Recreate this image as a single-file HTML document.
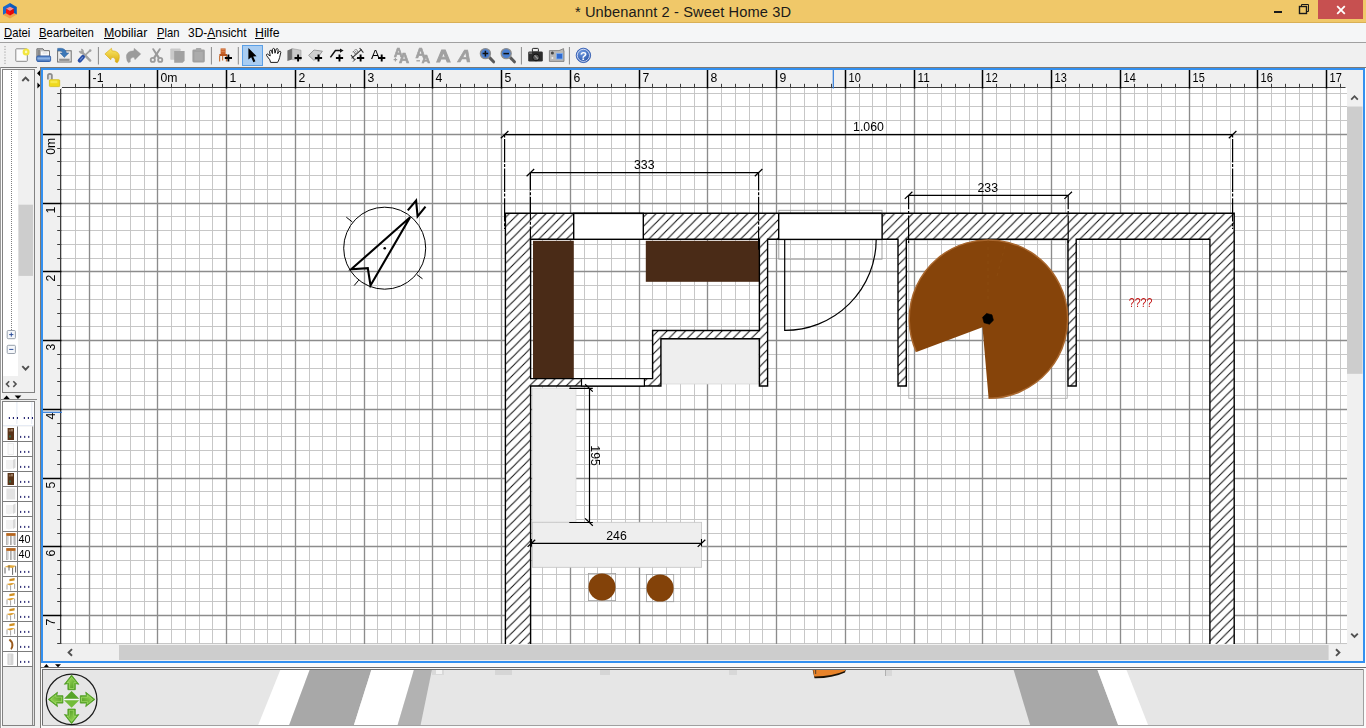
<!DOCTYPE html><html><head><meta charset="utf-8"><title>Sweet Home 3D</title><style>

*{margin:0;padding:0;box-sizing:border-box}
html,body{width:1366px;height:728px;overflow:hidden;background:#f0f0f0;font-family:"Liberation Sans",sans-serif;color:#000}
.abs{position:absolute}
#title{left:0;top:0;width:1366px;height:23px;background:linear-gradient(#f0c869 0,#f0c869 21.5px,#d9b056 22px,#d9b056 23px)}
#title .t{left:0;width:1366px;top:1.6px;text-align:center;font-size:14.65px;line-height:20px;color:#1a1a1a;letter-spacing:0.1px}
#menu{left:0;top:23px;width:1366px;height:19px;background:#f5f6f7}
#menu span{position:absolute;top:1.5px;font-size:12.4px;line-height:16px;white-space:nowrap;color:#000;display:inline-block;transform-origin:0 50%}
#menu u{text-decoration:underline;text-underline-offset:1.1px}
#menuline{left:0;top:42px;width:1366px;height:1px;background:#a0a0a0}
#tb{left:0;top:43px;width:1366px;height:24px;background:#f0f0f0}
.sep{position:absolute;top:4px;width:1px;height:17px;background:#8c8c8c}
svg{position:absolute;overflow:visible;will-change:transform}

</style></head><body>
<div id="title" class="abs"><div class="t abs">* Unbenannt 2 - Sweet Home 3D</div>
<svg style="left:0;top:0" width="22" height="22" viewBox="0 0 22 22"><polygon points="3,14.8 10,18.5 16.8,14.6 10,11" fill="#f0a04a"/><polygon points="10,3 3,7.1 3,14.8 10,11" fill="#1a68cc"/><polygon points="10,3 16.8,7.1 16.8,14.6 10,11" fill="#0d5abc"/><polygon points="6,8.8 10,6.7 13.9,8.8 10,10.9" fill="#ff8a8a"/><polygon points="6,8.8 10,10.9 10,15.4 6,13.3" fill="#ff1010"/><polygon points="13.9,8.8 10,10.9 10,15.4 13.9,13.3" fill="#e80808"/></svg>
<div class="abs" style="left:1274px;top:11px;width:8px;height:2px;background:#1a1a1a"></div>
<svg style="left:1298px;top:3px" width="12" height="12" viewBox="0 0 12 12"><path d="M3.5 3.5V1.5H10.5V8.5H8.5" fill="none" stroke="#1a1a1a" stroke-width="1"/><rect x="1.5" y="3.5" width="7" height="7" fill="none" stroke="#1a1a1a" stroke-width="1.4"/></svg>
<div class="abs" style="left:1318px;top:0;width:45px;height:19px;background:#c75050"></div>
<svg style="left:1336px;top:5px" width="10" height="10" viewBox="0 0 10 10"><path d="M1.2 1.2L8.8 8.8M8.8 1.2L1.2 8.8" stroke="#fff" stroke-width="1.8"/></svg>
</div>
<div id="menu" class="abs">
<span id="m0" style="left:4.4px;transform:scaleX(0.9088)"><u>D</u>atei</span>
<span id="m1" style="left:38.5px;transform:scaleX(0.9159)"><u>B</u>earbeiten</span>
<span id="m2" style="left:104.3px;transform:scaleX(0.9979)"><u>M</u>obiliar</span>
<span id="m3" style="left:157.3px;transform:scaleX(0.9029)"><u>P</u>lan</span>
<span id="m4" style="left:188.4px;transform:scaleX(0.9668)">3D-<u>A</u>nsicht</span>
<span id="m5" style="left:255.4px;transform:scaleX(0.9919)"><u>H</u>ilfe</span>
</div><div id="menuline" class="abs"></div>
<svg style="left:0;top:43px" width="700" height="24" viewBox="0 43 700 24" font-family="Liberation Sans, sans-serif">
<defs><linearGradient id="gb" x1="0" y1="0" x2="0" y2="1"><stop offset="0" stop-color="#7fa6d8"/><stop offset="1" stop-color="#2f5fa8"/></linearGradient><linearGradient id="gb2" x1="0" y1="0" x2="0" y2="1"><stop offset="0" stop-color="#4a7cc4"/><stop offset="0.45" stop-color="#8fb4e4"/><stop offset="1" stop-color="#3566b4"/></linearGradient><linearGradient id="gy" x1="0" y1="0" x2="0" y2="1"><stop offset="0" stop-color="#fbe96a"/><stop offset="1" stop-color="#d9a90c"/></linearGradient><radialGradient id="gh" cx="0.4" cy="0.3" r="0.8"><stop offset="0" stop-color="#6f9ae0"/><stop offset="1" stop-color="#1f4aa0"/></radialGradient></defs>
<path d="M5 46V64" stroke="#b4b4b4" stroke-width="1.4" stroke-dasharray="1.2 1.6" fill="none"/>
<rect x="97.9" y="47" width="1" height="17.5" fill="#8a8a8a"/>
<rect x="210.9" y="47" width="1" height="17.5" fill="#8a8a8a"/>
<rect x="237.8" y="47" width="1" height="17.5" fill="#8a8a8a"/>
<rect x="520.9" y="47" width="1" height="17.5" fill="#8a8a8a"/>
<rect x="568.9" y="47" width="1" height="17.5" fill="#8a8a8a"/>
<rect x="15.8" y="48.8" width="11.5" height="12.5" rx="0.6" fill="#fcfcfc" stroke="#8a8a8a" stroke-width="1"/><circle cx="26.1" cy="51.9" r="3.5" fill="#f3e63e"/><circle cx="26.1" cy="51.9" r="1.3" fill="#fdf8b8"/>
<path d="M36.9 48.8H43L44.4 50.7H49.4V60H36.9Z" fill="#c4c4c4" stroke="#6e6e6e" stroke-width="1"/><rect x="37.6" y="49.6" width="2.6" height="7" fill="#8a8a8a"/><rect x="41" y="51.4" width="8" height="4.4" fill="#fafafa"/><path d="M42.6 53H47.4" stroke="#c8c8c8" stroke-width="0.7"/><rect x="36.8" y="56" width="13.8" height="5.5" rx="1.1" fill="url(#gb2)" stroke="#2c5aa4" stroke-width="0.9"/>
<rect x="57.6" y="50.8" width="13.6" height="11.2" fill="#ebebeb" stroke="#6e6e6e" stroke-width="1"/><rect x="59.2" y="58.7" width="10.4" height="2.2" fill="#909090"/><path d="M57.6 48.4Q65.8 47.4 66.4 53H68.8L64.3 57.4L60.2 53H62.6Q62.4 50.4 57.6 50.8Z" fill="#3c78b8" stroke="#2a5f9a" stroke-width="0.5"/>
<path d="M81.4 51.6L90.2 60.6" stroke="#a2a2a2" stroke-width="2.4" stroke-linecap="round"/><path d="M79.4 51Q80.2 53.6 82.8 52.6Q83.8 50 81.2 49.2" fill="none" stroke="#a2a2a2" stroke-width="1.5"/><path d="M90 50.6L84.6 55.6" stroke="#a2a2a2" stroke-width="1.7" stroke-linecap="round"/><circle cx="90.2" cy="50.5" r="1.3" fill="#a2a2a2"/><path d="M83 56.9L79.7 60.6" stroke="#2a4fa6" stroke-width="4" stroke-linecap="round"/><path d="M82.6 57.4L80.4 59.9" stroke="#6f8fd0" stroke-width="1.1" stroke-linecap="round"/>
<path d="M104.9 53.9L111.5 48.3L111.9 50.8Q119.7 50.9 119.3 57.5Q119 61.2 117.2 62.8L115.3 61.8Q116.2 57.5 111.7 57.3L110.7 59.7Z" fill="url(#gy)" stroke="#d8aa0c" stroke-width="0.6" stroke-linejoin="round"/>
<path transform="translate(245.7 0) scale(-1 1)" d="M104.9 53.9L111.5 48.3L111.9 50.8Q119.7 50.9 119.3 57.5Q119 61.2 117.2 62.8L115.3 61.8Q116.2 57.5 111.7 57.3L110.7 59.7Z" fill="#9b9b9b" stroke="#9b9b9b" stroke-width="0.4" stroke-linejoin="round"/>
<path d="M151.9 48.8L153.7 48.2L160 57.4L158 58.8Z" fill="#9a9a9a"/><path d="M161.1 48.8L159.3 48.2L153 57.4L155 58.8Z" fill="#9a9a9a"/><ellipse cx="152.8" cy="59.9" rx="2.1" ry="2" fill="none" stroke="#9a9a9a" stroke-width="1.8"/><ellipse cx="160.2" cy="59.9" rx="2.1" ry="2" fill="none" stroke="#9a9a9a" stroke-width="1.8"/>
<rect x="170.3" y="48.4" width="10.3" height="11.4" rx="0.8" fill="#c9c9c9"/><path d="M174.2 51H184.6V60.8L182.6 62.8H174.2Z" fill="#a1a1a1"/>
<rect x="192.4" y="49.4" width="12.4" height="13" rx="1.4" fill="#a0a0a0"/><rect x="195.8" y="48" width="5.6" height="2.8" rx="1" fill="#a8a8a8"/><rect x="194.4" y="51.8" width="8.4" height="8.8" fill="#acacac"/>
<path d="M220.6 48.4H225.6V54H220.6Z" fill="#c9632a"/><path d="M219.4 54H227V56H219.4Z" fill="#b9551f"/><path d="M219.6 56V61.6M222.6 56V60.4M226.4 56V61.6" stroke="#c9773f" stroke-width="1.2" fill="none"/><path d="M221.4 49.6H224.8M221.4 51.4H224.8" stroke="#e8a070" stroke-width="0.6"/>
<path d="M224.8 58.0H232.0M228.4 54.4V61.6" stroke="#000" stroke-width="1.9" fill="none"/>
<rect x="242.5" y="45.5" width="20" height="20" fill="#a9cdf2" stroke="#5a9fe6" stroke-width="1"/>
<path d="M248.4 48V59.6L251.2 57.2L253.4 62.2L255.4 61.2L253.2 56.4L256.6 56.2Z" fill="#000"/>
<path d="M270.6 62.4L269.8 59.8L266.6 55.6Q266 54.2 267.4 54L270.2 56L269.6 51.4Q270 49.8 271.4 50.4L272.4 53.6L272.4 49.2Q273.2 47.8 274.4 48.8L275 53.2L276.2 49Q277.4 48 278.2 49.4L277.6 53.8L279.2 51.4Q280.6 50.8 280.8 52.4L279.6 57.6Q279 60 277.6 62.4Z" fill="#fff" stroke="#111" stroke-width="0.95" stroke-linejoin="round"/>
<path d="M287.4 50.4L292 48.6V59.6L287.4 61Z" fill="#6e6e6e"/><path d="M292 48.6L301 50.2V60L292 59.6Z" fill="#c8c8c8" stroke="#8a8a8a" stroke-width="0.5"/>
<path d="M294.5 58.0H301.70000000000005M298.1 54.4V61.6" stroke="#000" stroke-width="1.9" fill="none"/>
<path d="M308.6 55.4L314 50L322.4 51.2L319 55.8L320 58.6L313.6 60Z" fill="#cfcfcf" stroke="#8e8e8e" stroke-width="0.9"/>
<path d="M314.9 58.0H322.1M318.5 54.4V61.6" stroke="#000" stroke-width="1.9" fill="none"/>
<path d="M330.4 57.4L335.4 50.6H341" fill="none" stroke="#111" stroke-width="1.5"/><path d="M340 48.4L343.6 50.6L340 52.8Z" fill="#111"/>
<path d="M335.9 58.0H343.1M339.5 54.4V61.6" stroke="#000" stroke-width="1.9" fill="none"/>
<path d="M351.6 58.4L361.6 49.4" stroke="#333" stroke-width="1.1"/><path d="M351 55L354.6 59.6M359.6 48L363.4 52.6" stroke="#333" stroke-width="1.1"/><text x="352.6" y="53.6" font-size="5" fill="#333" transform="rotate(-42 355 52)">10</text><path d="M353 61.6L356 58.6" stroke="#333" stroke-width="1"/>
<path d="M357.0 58.0H364.20000000000005M360.6 54.4V61.6" stroke="#000" stroke-width="1.9" fill="none"/>
<text x="370.9" y="59.1" font-size="13.7" fill="#000" textLength="8.9" lengthAdjust="spacingAndGlyphs">A</text>
<path d="M378.09999999999997 58.0H385.3M381.7 54.4V61.6" stroke="#000" stroke-width="1.9" fill="none"/>
<g fill="#a0a0a0" stroke="#a0a0a0" stroke-width="0.7" font-weight="bold"><text x="393.9" y="57.2" font-size="12">A</text><text x="399" y="62.5" font-size="14">A</text></g><path d="M393.6 59.6H397.2M395.4 57.8V61.4" stroke="#a0a0a0" stroke-width="1.1"/>
<g fill="#a0a0a0" stroke="#a0a0a0" stroke-width="0.7" font-weight="bold"><text x="415.6" y="58.4" font-size="14">A</text><text x="421.8" y="62.5" font-size="11.5">A</text></g><path d="M416.4 60.8H420" stroke="#a0a0a0" stroke-width="1.3"/>
<text x="436.2" y="61.8" font-size="16" fill="#a0a0a0" font-weight="bold" textLength="14.4" lengthAdjust="spacingAndGlyphs" stroke="#a0a0a0" stroke-width="0.9">A</text>
<text x="457.8" y="61.8" font-size="16" fill="#a0a0a0" font-weight="bold" font-style="italic" textLength="13.4" lengthAdjust="spacingAndGlyphs" stroke="#a0a0a0" stroke-width="0.6">A</text>
<path d="M489.59999999999997 57.6L493.59999999999997 61.8" stroke="#5a5a5a" stroke-width="3" stroke-linecap="round"/>
<circle cx="485.4" cy="53.6" r="5" fill="#4a7fd0" stroke="#8e8e8e" stroke-width="1.4"/>
<path d="M482.59999999999997 53.6H488.2M485.4 50.8V56.4" stroke="#111" stroke-width="1.5" fill="none"/>
<path d="M510.4 57.6L514.4 61.8" stroke="#5a5a5a" stroke-width="3" stroke-linecap="round"/>
<circle cx="506.2" cy="53.6" r="5" fill="#4a7fd0" stroke="#8e8e8e" stroke-width="1.4"/>
<path d="M503.4 53.6H509.0" stroke="#111" stroke-width="1.5" fill="none"/>
<rect x="532.4" y="48.4" width="6" height="3.6" rx="0.8" fill="none" stroke="#222" stroke-width="1"/><rect x="528.2" y="51.4" width="14.6" height="10.2" rx="1.4" fill="#2c2c2c"/><circle cx="536" cy="57.4" r="3.4" fill="#555" stroke="#111" stroke-width="1"/><path d="M534.6 55.4L538 59" stroke="#999" stroke-width="1.2"/><rect x="529" y="52.4" width="3" height="1.4" fill="#777"/>
<path d="M549.4 50.6H559L563.6 48.6V50.6H564V61.4H549.4Z" fill="#b8b8b8" stroke="#777" stroke-width="0.8"/><rect x="556.4" y="53.4" width="6.2" height="5.6" fill="#2f6ad0" stroke="#7fb0f0" stroke-width="0.8"/><circle cx="552.4" cy="53" r="1.5" fill="#444"/><circle cx="552.4" cy="58" r="1" fill="#eee"/>
<circle cx="583.4" cy="55.4" r="7.2" fill="url(#gh)" stroke="#2a55b0" stroke-width="0.8"/><circle cx="583.4" cy="55.4" r="6.1" fill="none" stroke="#e8eefc" stroke-width="0.8"/><text x="583.5" y="59.6" font-size="11.5" font-weight="bold" fill="#fff" text-anchor="middle">?</text>
</svg>
<svg style="left:0;top:0" width="45" height="728" viewBox="0 0 45 728" font-family="Liberation Sans, sans-serif">
<rect x="0" y="67" width="37" height="1" fill="#7a7a7a"/>
<rect x="0" y="67" width="1" height="661" fill="#9a9a9a"/>
<rect x="1" y="68" width="1" height="660" fill="#fcfcfc"/>
<rect x="2.5" y="69.5" width="32" height="323" fill="#f0f0f0" stroke="#828282" stroke-width="1"/>
<rect x="3" y="70" width="15" height="306" fill="#fff"/>
<path d="M11.5 71V330" stroke="#808080" stroke-width="1" stroke-dasharray="1 1" fill="none"/>
<rect x="18.5" y="204.7" width="14.5" height="71.2" fill="#cdcdcd"/>
<path d="M22.3 81L25.6 77.6L28.9 81" fill="none" stroke="#505050" stroke-width="1.9"/>
<path d="M22.3 366.2L25.6 369.6L28.9 366.2" fill="none" stroke="#505050" stroke-width="1.9"/>
<rect x="7.2" y="330.5" width="8.2" height="8.2" rx="1" fill="#f6f8fb" stroke="#8d96a3" stroke-width="0.9"/>
<path d="M9.2 334.6H13.4M11.3 332.5V336.7" stroke="#2e4f9a" stroke-width="1" fill="none"/>
<rect x="7.2" y="345.3" width="8.2" height="8.2" rx="1" fill="#f6f8fb" stroke="#8d96a3" stroke-width="0.9"/>
<path d="M9.2 349.40000000000003H13.4" stroke="#2e4f9a" stroke-width="1" fill="none"/>
<path d="M9.2 381.3L6.4 384.1L9.2 386.9M13.3 381.3L16.1 384.1L13.3 386.9" fill="none" stroke="#505050" stroke-width="1.5"/>
<path d="M40 70.3L37 73.3L40 76.3ZM37.4 82.6L40.4 85.6L37.4 88.6Z" fill="#000"/>
<path d="M3.4 399L6.6 395.6L9.8 399ZM14.6 395.6L21.4 395.6L18 399Z" fill="#000"/>
<rect x="1" y="399" width="36" height="1" fill="#8a8a8a"/>
<rect x="2.5" y="401.5" width="32" height="324" fill="#ececec" stroke="#828282" stroke-width="1"/>
<rect x="3" y="402" width="31" height="24" fill="#fff"/>
<rect x="16.4" y="402" width="1" height="22" fill="#e3e9f3"/><rect x="31.3" y="402" width="1" height="22" fill="#e3e9f3"/>
<rect x="3" y="425" width="31" height="1" fill="#e6ebf4"/>
<rect x="8.8" y="417" width="1.1" height="2" fill="#1a1a6a"/><rect x="12.850000000000001" y="417" width="1.1" height="2" fill="#1a1a6a"/><rect x="16.9" y="417" width="1.1" height="2" fill="#1a1a6a"/>
<rect x="23.8" y="417" width="1.1" height="2" fill="#1a1a6a"/><rect x="27.85" y="417" width="1.1" height="2" fill="#1a1a6a"/><rect x="31.9" y="417" width="1.1" height="2" fill="#1a1a6a"/>
<rect x="3" y="426.5" width="30" height="240.0" fill="#fff"/>
<path d="M17.5 426.5V666.5M32.6 426.5V725M3 441.5H33M3 456.5H33M3 471.5H33M3 486.5H33M3 501.5H33M3 516.5H33M3 531.5H33M3 546.5H33M3 561.5H33M3 576.5H33M3 591.5H33M3 606.5H33M3 621.5H33M3 636.5H33M3 651.5H33M3 666.5H33" stroke="#7d7d7d" stroke-width="1" fill="none"/>
<rect x="7.6" y="428.0" width="6.4" height="12" fill="#5a3418"/><rect x="8.8" y="429.5" width="2" height="2" fill="#8c6a50"/><rect x="11" y="429.0" width="2" height="2.4" fill="#9a7a60"/><rect x="9" y="435.5" width="2" height="2" fill="#3a6a4a"/>
<rect x="20.1" y="435.9" width="1.1" height="2" fill="#1a1a6a"/><rect x="24.150000000000002" y="435.9" width="1.1" height="2" fill="#1a1a6a"/><rect x="28.200000000000003" y="435.9" width="1.1" height="2" fill="#1a1a6a"/>
<rect x="8" y="443.5" width="5.4" height="11" fill="#fbfbfb" stroke="#e4e4e4" stroke-width="0.7"/>
<rect x="20.1" y="450.9" width="1.1" height="2" fill="#1a1a6a"/><rect x="24.150000000000002" y="450.9" width="1.1" height="2" fill="#1a1a6a"/><rect x="28.200000000000003" y="450.9" width="1.1" height="2" fill="#1a1a6a"/>
<path d="M6 460.0L13 460.0L15.4 458.5L15.4 467.5L9 469.5L6 468.5Z" fill="#f1f1f1"/><path d="M13 460.0L15.4 458.5L15.4 467.5L13 469.0Z" fill="#d9d9d9"/>
<rect x="20.1" y="465.9" width="1.1" height="2" fill="#1a1a6a"/><rect x="24.150000000000002" y="465.9" width="1.1" height="2" fill="#1a1a6a"/><rect x="28.200000000000003" y="465.9" width="1.1" height="2" fill="#1a1a6a"/>
<rect x="7.6" y="473.0" width="6.4" height="12" fill="#5a3418"/><rect x="8.8" y="474.5" width="2" height="2" fill="#8c6a50"/><rect x="11" y="474.0" width="2" height="2.4" fill="#9a7a60"/><rect x="9" y="480.5" width="2" height="2" fill="#3a6a4a"/>
<rect x="20.1" y="480.9" width="1.1" height="2" fill="#1a1a6a"/><rect x="24.150000000000002" y="480.9" width="1.1" height="2" fill="#1a1a6a"/><rect x="28.200000000000003" y="480.9" width="1.1" height="2" fill="#1a1a6a"/>
<rect x="6.4" y="488.5" width="8.8" height="11" fill="#e3e3e3"/>
<rect x="20.1" y="495.9" width="1.1" height="2" fill="#1a1a6a"/><rect x="24.150000000000002" y="495.9" width="1.1" height="2" fill="#1a1a6a"/><rect x="28.200000000000003" y="495.9" width="1.1" height="2" fill="#1a1a6a"/>
<path d="M6 505.0L13 505.0L15.4 503.5L15.4 512.5L9 514.5L6 513.5Z" fill="#f1f1f1"/><path d="M13 505.0L15.4 503.5L15.4 512.5L13 514.0Z" fill="#d9d9d9"/>
<rect x="20.1" y="510.9" width="1.1" height="2" fill="#1a1a6a"/><rect x="24.150000000000002" y="510.9" width="1.1" height="2" fill="#1a1a6a"/><rect x="28.200000000000003" y="510.9" width="1.1" height="2" fill="#1a1a6a"/>
<path d="M6 520.0L13 520.0L15.4 518.5L15.4 527.5L9 529.5L6 528.5Z" fill="#f1f1f1"/><path d="M13 520.0L15.4 518.5L15.4 527.5L13 529.0Z" fill="#d9d9d9"/>
<rect x="20.1" y="525.9" width="1.1" height="2" fill="#1a1a6a"/><rect x="24.150000000000002" y="525.9" width="1.1" height="2" fill="#1a1a6a"/><rect x="28.200000000000003" y="525.9" width="1.1" height="2" fill="#1a1a6a"/>
<path d="M6.2 533.1H15.6V535.9H6.2Z" fill="#b5651d"/><path d="M7 535.9V545.1M10.9 535.9V545.1M14.8 535.9V545.1" stroke="#8a8a8a" stroke-width="1.2" fill="none"/><path d="M8 535.9V544.5M13.6 535.9V544.5" stroke="#d8d8d8" stroke-width="1.6" fill="none"/>
<text x="18.6" y="542.8" font-size="11.8" fill="#000" textLength="12" lengthAdjust="spacingAndGlyphs">40</text>
<path d="M6.2 548.1H15.6V550.9H6.2Z" fill="#b5651d"/><path d="M7 550.9V560.1M10.9 550.9V560.1M14.8 550.9V560.1" stroke="#8a8a8a" stroke-width="1.2" fill="none"/><path d="M8 550.9V559.5M13.6 550.9V559.5" stroke="#d8d8d8" stroke-width="1.6" fill="none"/>
<text x="18.6" y="557.8" font-size="11.8" fill="#000" textLength="12" lengthAdjust="spacingAndGlyphs">40</text>
<path d="M4.6 567.1L9 564.9L16 565.7L12.6 567.9Z" fill="#e2a83c"/><path d="M5 567.5V573.5M12.6 567.9V574.9M15.6 566.1V572.5M9 565.5V570.5" stroke="#555" stroke-width="0.9" fill="none"/>
<rect x="20.1" y="570.9" width="1.1" height="2" fill="#1a1a6a"/><rect x="24.150000000000002" y="570.9" width="1.1" height="2" fill="#1a1a6a"/><rect x="28.200000000000003" y="570.9" width="1.1" height="2" fill="#1a1a6a"/>
<path d="M9.4 578.9L14.6 578.1L14.6 580.5L9.4 581.3Z" fill="#cf8f22"/><path d="M6.4 584.1L12 582.9L15 583.5L10 585.5Z" fill="#dc9c2c"/><path d="M7 584.7V589.5M10.6 585.5V590.5M14.6 583.9V588.9" stroke="#9a9a9a" stroke-width="0.9" fill="none"/>
<rect x="20.1" y="585.9" width="1.1" height="2" fill="#1a1a6a"/><rect x="24.150000000000002" y="585.9" width="1.1" height="2" fill="#1a1a6a"/><rect x="28.200000000000003" y="585.9" width="1.1" height="2" fill="#1a1a6a"/>
<path d="M9.4 593.9L14.6 593.1L14.6 595.5L9.4 596.3Z" fill="#cf8f22"/><path d="M6.4 599.1L12 597.9L15 598.5L10 600.5Z" fill="#dc9c2c"/><path d="M7 599.7V604.5M10.6 600.5V605.5M14.6 598.9V603.9" stroke="#9a9a9a" stroke-width="0.9" fill="none"/>
<rect x="20.1" y="600.9" width="1.1" height="2" fill="#1a1a6a"/><rect x="24.150000000000002" y="600.9" width="1.1" height="2" fill="#1a1a6a"/><rect x="28.200000000000003" y="600.9" width="1.1" height="2" fill="#1a1a6a"/>
<path d="M9.4 608.9L14.6 608.1L14.6 610.5L9.4 611.3Z" fill="#cf8f22"/><path d="M6.4 614.1L12 612.9L15 613.5L10 615.5Z" fill="#dc9c2c"/><path d="M7 614.7V619.5M10.6 615.5V620.5M14.6 613.9V618.9" stroke="#9a9a9a" stroke-width="0.9" fill="none"/>
<rect x="20.1" y="615.9" width="1.1" height="2" fill="#1a1a6a"/><rect x="24.150000000000002" y="615.9" width="1.1" height="2" fill="#1a1a6a"/><rect x="28.200000000000003" y="615.9" width="1.1" height="2" fill="#1a1a6a"/>
<path d="M9.4 623.9L14.6 623.1L14.6 625.5L9.4 626.3Z" fill="#cf8f22"/><path d="M6.4 629.1L12 627.9L15 628.5L10 630.5Z" fill="#dc9c2c"/><path d="M7 629.7V634.5M10.6 630.5V635.5M14.6 628.9V633.9" stroke="#9a9a9a" stroke-width="0.9" fill="none"/>
<rect x="20.1" y="630.9" width="1.1" height="2" fill="#1a1a6a"/><rect x="24.150000000000002" y="630.9" width="1.1" height="2" fill="#1a1a6a"/><rect x="28.200000000000003" y="630.9" width="1.1" height="2" fill="#1a1a6a"/>
<path d="M9.4 639.5Q12.6 641.9 12.4 645.5Q12.2 648.5 10.8 649.1" fill="none" stroke="#9a5a1c" stroke-width="2"/>
<rect x="20.1" y="645.9" width="1.1" height="2" fill="#1a1a6a"/><rect x="24.150000000000002" y="645.9" width="1.1" height="2" fill="#1a1a6a"/><rect x="28.200000000000003" y="645.9" width="1.1" height="2" fill="#1a1a6a"/>
<rect x="7.4" y="653.5" width="6" height="11.4" rx="1" fill="#d4d4d4"/><rect x="8.8" y="654.3" width="2" height="10" fill="#e2e2e2"/>
<rect x="20.1" y="660.9" width="1.1" height="2" fill="#1a1a6a"/><rect x="24.150000000000002" y="660.9" width="1.1" height="2" fill="#1a1a6a"/><rect x="28.200000000000003" y="660.9" width="1.1" height="2" fill="#1a1a6a"/>
</svg>
<div class="abs" style="left:40px;top:67px;width:1326px;height:597px;background:#fdfdfd"></div><div class="abs" style="left:40px;top:67px;width:1326px;height:1px;background:#7c7a76"></div><div class="abs" style="left:40px;top:67px;width:1px;height:596px;background:#7c7a76"></div>
<div class="abs" style="left:41px;top:68px;width:1324px;height:595px;background:#3390f0"></div>
<div class="abs" style="left:43px;top:70px;width:1320px;height:591px;background:#f0f0f0"></div>
<div class="abs" style="left:61px;top:88px;width:1286px;height:556px;background:#fff"></div>
<svg style="left:0;top:0" width="1366" height="728" viewBox="0 0 1366 728" font-family="Liberation Sans, sans-serif">
<defs><clipPath id="cp"><rect x="61" y="88" width="1286" height="556"/></clipPath>
<clipPath id="cpt"><rect x="61" y="70" width="1286" height="19"/></clipPath>
<clipPath id="cpl"><rect x="43" y="88" width="19" height="556"/></clipPath>
<pattern id="hatch" patternUnits="userSpaceOnUse" x="7.67" y="0" width="9.17" height="9.17">
<rect width="9.17" height="9.17" fill="#fff"/>
<path d="M9.17 0L0 9.17M18.34 0L0 18.34M-1 1L1 -1" stroke="#0a0a0a" stroke-width="1" fill="none"/>
</pattern></defs>
<g clip-path="url(#cp)">
<path d="M61.5 88V644M75.5 88V644M102.5 88V644M116.5 88V644M130.5 88V644M144.5 88V644M171.5 88V644M185.5 88V644M199.5 88V644M212.5 88V644M240.5 88V644M254.5 88V644M267.5 88V644M281.5 88V644M309.5 88V644M322.5 88V644M336.5 88V644M350.5 88V644M377.5 88V644M391.5 88V644M405.5 88V644M419.5 88V644M446.5 88V644M460.5 88V644M474.5 88V644M487.5 88V644M515.5 88V644M529.5 88V644M542.5 88V644M556.5 88V644M584.5 88V644M597.5 88V644M611.5 88V644M625.5 88V644M652.5 88V644M666.5 88V644M680.5 88V644M694.5 88V644M721.5 88V644M735.5 88V644M749.5 88V644M762.5 88V644M790.5 88V644M804.5 88V644M817.5 88V644M831.5 88V644M859.5 88V644M872.5 88V644M886.5 88V644M900.5 88V644M927.5 88V644M941.5 88V644M955.5 88V644M969.5 88V644M996.5 88V644M1010.5 88V644M1024.5 88V644M1037.5 88V644M1065.5 88V644M1079.5 88V644M1092.5 88V644M1106.5 88V644M1134.5 88V644M1147.5 88V644M1161.5 88V644M1175.5 88V644M1202.5 88V644M1216.5 88V644M1230.5 88V644M1244.5 88V644M1271.5 88V644M1285.5 88V644M1299.5 88V644M1312.5 88V644M1340.5 88V644M61 93.5H1347M61 106.5H1347M61 120.5H1347M61 148.5H1347M61 161.5H1347M61 175.5H1347M61 189.5H1347M61 216.5H1347M61 230.5H1347M61 244.5H1347M61 258.5H1347M61 285.5H1347M61 299.5H1347M61 313.5H1347M61 326.5H1347M61 354.5H1347M61 368.5H1347M61 381.5H1347M61 395.5H1347M61 423.5H1347M61 436.5H1347M61 450.5H1347M61 464.5H1347M61 491.5H1347M61 505.5H1347M61 519.5H1347M61 533.5H1347M61 560.5H1347M61 574.5H1347M61 588.5H1347M61 601.5H1347M61 629.5H1347M61 643.5H1347" stroke="#c4c4c4" stroke-width="0.95" fill="none"/>
<path d="M89.5 88V644M157.5 88V644M226.5 88V644M295.5 88V644M364.5 88V644M432.5 88V644M501.5 88V644M570.5 88V644M639.5 88V644M707.5 88V644M776.5 88V644M845.5 88V644M914.5 88V644M982.5 88V644M1051.5 88V644M1120.5 88V644M1189.5 88V644M1257.5 88V644M1326.5 88V644M61 134.5H1347M61 203.5H1347M61 271.5H1347M61 340.5H1347M61 409.5H1347M61 478.5H1347M61 546.5H1347M61 615.5H1347" stroke="#8c8c8c" stroke-width="1.35" fill="none"/>
<rect x="533" y="240.8" width="40.8" height="137.6" fill="#4a2b17"/>
<rect x="645.8" y="240.8" width="113.4" height="41" fill="#4a2b17"/>
<rect x="661.7" y="339.6" width="96.5" height="44.4" fill="#eeeeee" stroke="#d4d4d4" stroke-width="0.7"/>
<rect x="532.4" y="388.2" width="43.6" height="134" fill="#eeeeee" stroke="#d8d8d8" stroke-width="0.7"/>
<rect x="532.4" y="522.3" width="169.2" height="45" fill="#eeeeee" stroke="#c4c4c4" stroke-width="0.8"/>
<rect x="908.8" y="240" width="158.4" height="158.3" fill="none" stroke="#a8a8a8" stroke-width="0.8"/>
<path d="M506.1 214H1233.5V700H1210.6V238.5H529.9V700H506.1ZM760.1 235H766.9V385.3H760.1ZM653.3 331.2H763V338H653.3ZM653.3 331.2H660.2V385.3H653.3ZM526 379.3H660.2V385.3H526ZM898.7 235H905.6V385.3H898.7ZM1068.7 235H1075.5V385.3H1068.7Z" fill="none" stroke="#000" stroke-width="2.8" stroke-linejoin="miter"/>
<path d="M506.1 214H1233.5V700H1210.6V238.5H529.9V700H506.1ZM760.1 235H766.9V385.3H760.1ZM653.3 331.2H763V338H653.3ZM653.3 331.2H660.2V385.3H653.3ZM526 379.3H660.2V385.3H526ZM898.7 235H905.6V385.3H898.7ZM1068.7 235H1075.5V385.3H1068.7Z" fill="url(#hatch)" stroke="none" fill-rule="nonzero"/>
<rect x="573.7" y="213.4" width="69.6" height="25.9" fill="#fff" stroke="#000" stroke-width="1.4"/>
<rect x="778.8" y="210.3" width="103.2" height="48.9" fill="none" stroke="#9a9a9a" stroke-width="0.9"/>
<rect x="778.7" y="213.4" width="103.4" height="26" fill="#fff" stroke="#000" stroke-width="1.4"/>
<path d="M784.7 239.5V330.4A91.2 91.2 0 0 0 876.2 239.5" fill="none" stroke="#000" stroke-width="1.2"/>
<rect x="581.5" y="378.6" width="62.9" height="7.4" fill="#fff" stroke="#000" stroke-width="1.2"/>
<path d="M982.5 327.3L916.4 352A79.2 79.2 0 1 1 988.6 398.3Z" fill="#86440a"/>
<path d="M916.4 352A79.2 79.2 0 1 1 988.6 398.3" fill="none" stroke="#a9672e" stroke-width="1.5"/>
<path d="M988 240V300M1005 246L996 280" stroke="#925216" stroke-width="0.8" stroke-dasharray="3 4" fill="none" opacity="0.6"/>
<polygon points="993.41,320.25 989.45,324.21 984.04,322.76 982.59,317.35 986.55,313.39 991.96,314.84" fill="#000" stroke="#000" stroke-width="0.6" stroke-linejoin="round"/>
<rect x="588.4" y="573.4" width="27.2" height="27.2" fill="none" stroke="#a0a0a0" stroke-width="0.8"/>
<circle cx="602" cy="587" r="13.5" fill="#834209"/>
<rect x="646.5" y="574.5" width="27.2" height="27.2" fill="none" stroke="#a0a0a0" stroke-width="0.8"/>
<circle cx="660.1" cy="588.1" r="13.5" fill="#834209"/>
<path d="M504.6 134.6H1232.6M500.8 138.2L508.4 131M1228.8 138.2L1236.4 131" stroke="#000" stroke-width="1.2" fill="none"/>
<path d="M504.6 134.4V229M1232.6 134.4V229" stroke="#000" stroke-width="1.2" fill="none" stroke-dasharray="3 1.6 23.4 1.6"/>
<text x="868.5" y="131.3" font-size="12.3" text-anchor="middle" fill="#000">1.060</text>
<path d="M530.4 172.6H758.6M526.6 176.2L534.2 169M754.8 176.2L762.4 169" stroke="#000" stroke-width="1.2" fill="none"/>
<path d="M530.4 172.6V250M758.6 172.6V250" stroke="#000" stroke-width="1.2" fill="none" stroke-dasharray="3 1.6 23.4 1.6" stroke-dashoffset="10"/>
<text x="644.3" y="169" font-size="12.3" text-anchor="middle" fill="#000">333</text>
<path d="M908.6 195.3H1068.2M904.8 198.9L912.4 191.7M1064.4 198.9L1072 191.7" stroke="#000" stroke-width="1.2" fill="none"/>
<path d="M908.6 195.3V243M1068.2 195.3V243" stroke="#000" stroke-width="1.2" fill="none" stroke-dasharray="3 1.6 23.4 1.6" stroke-dashoffset="14"/>
<text x="987.8" y="191.8" font-size="12.3" text-anchor="middle" fill="#000">233</text>
<path d="M589.5 388.4V522.5M585.1 384.3L592.8 391.6M585.1 518.4L592.8 525.7" stroke="#000" stroke-width="1.2" fill="none"/>
<path d="M569.3 388.4H592.8M569.3 522.5H592.8" stroke="#000" stroke-width="1.2" fill="none"/>
<text transform="translate(591.4 455.6) rotate(90)" x="0" y="0" font-size="12.3" text-anchor="middle" fill="#000">195</text>
<path d="M531.4 543.3H701.5M527.6 546.9L535.2 539.7M697.7 546.9L705.3 539.7" stroke="#000" stroke-width="1.3" fill="none"/>
<path d="M531.4 539V546.4M701.5 539V546.4" stroke="#000" stroke-width="1.1" fill="none"/>
<text x="616.5" y="540" font-size="12.3" text-anchor="middle" fill="#000">246</text>
<text x="1128.7" y="307.1" font-size="12.6" fill="#c41414" textLength="23.8" lengthAdjust="spacingAndGlyphs">????</text>
<circle cx="384.7" cy="248.2" r="41" fill="none" stroke="#000" stroke-width="1"/>
<path d="M346.3 217.2L352.4 222M416.9 274.6L422.5 278.8M354.2 285.5L358.7 280.2" stroke="#000" stroke-width="1" fill="none"/>
<path d="M410.1 217.2L351.2 269.3L367.8 268.1L370.5 285.5Z" fill="none" stroke="#000" stroke-width="2.1" stroke-linejoin="miter"/>
<path d="M407.8 210.4L416.1 200.6L417.6 216.4L425.5 206.6" fill="none" stroke="#000" stroke-width="2.1"/>
<circle cx="384.7" cy="248.2" r="1.3" fill="#000"/>
</g>
<g clip-path="url(#cpt)">
<path d="M62 87.5H1345.5" stroke="#3c3c3c" stroke-width="1" fill="none"/>
<path d="M75.5 83.8V88M102.5 83.8V88M116.5 83.8V88M130.5 83.8V88M144.5 83.8V88M171.5 83.8V88M185.5 83.8V88M199.5 83.8V88M212.5 83.8V88M240.5 83.8V88M254.5 83.8V88M267.5 83.8V88M281.5 83.8V88M309.5 83.8V88M322.5 83.8V88M336.5 83.8V88M350.5 83.8V88M377.5 83.8V88M391.5 83.8V88M405.5 83.8V88M419.5 83.8V88M446.5 83.8V88M460.5 83.8V88M474.5 83.8V88M487.5 83.8V88M515.5 83.8V88M529.5 83.8V88M542.5 83.8V88M556.5 83.8V88M584.5 83.8V88M597.5 83.8V88M611.5 83.8V88M625.5 83.8V88M652.5 83.8V88M666.5 83.8V88M680.5 83.8V88M694.5 83.8V88M721.5 83.8V88M735.5 83.8V88M749.5 83.8V88M762.5 83.8V88M790.5 83.8V88M804.5 83.8V88M817.5 83.8V88M831.5 83.8V88M859.5 83.8V88M872.5 83.8V88M886.5 83.8V88M900.5 83.8V88M927.5 83.8V88M941.5 83.8V88M955.5 83.8V88M969.5 83.8V88M996.5 83.8V88M1010.5 83.8V88M1024.5 83.8V88M1037.5 83.8V88M1065.5 83.8V88M1079.5 83.8V88M1092.5 83.8V88M1106.5 83.8V88M1134.5 83.8V88M1147.5 83.8V88M1161.5 83.8V88M1175.5 83.8V88M1202.5 83.8V88M1216.5 83.8V88M1230.5 83.8V88M1244.5 83.8V88M1271.5 83.8V88M1285.5 83.8V88M1299.5 83.8V88M1312.5 83.8V88M1340.5 83.8V88" stroke="#3c3c3c" stroke-width="1" fill="none"/>
<path d="M89.5 70V88.5M157.5 70V88.5M226.5 70V88.5M295.5 70V88.5M364.5 70V88.5M432.5 70V88.5M501.5 70V88.5M570.5 70V88.5M639.5 70V88.5M707.5 70V88.5M776.5 70V88.5M845.5 70V88.5M914.5 70V88.5M982.5 70V88.5M1051.5 70V88.5M1120.5 70V88.5M1189.5 70V88.5M1257.5 70V88.5M1326.5 70V88.5" stroke="#000" stroke-width="1.5" fill="none"/>
<text x="92.6" y="81.8" font-size="12.2" fill="#000">-1</text>
<text x="160.6" y="81.8" font-size="12.2" fill="#000">0m</text>
<text x="229.6" y="81.8" font-size="12.2" fill="#000">1</text>
<text x="298.6" y="81.8" font-size="12.2" fill="#000">2</text>
<text x="367.6" y="81.8" font-size="12.2" fill="#000">3</text>
<text x="435.6" y="81.8" font-size="12.2" fill="#000">4</text>
<text x="504.6" y="81.8" font-size="12.2" fill="#000">5</text>
<text x="573.6" y="81.8" font-size="12.2" fill="#000">6</text>
<text x="642.6" y="81.8" font-size="12.2" fill="#000">7</text>
<text x="710.6" y="81.8" font-size="12.2" fill="#000">8</text>
<text x="779.6" y="81.8" font-size="12.2" fill="#000">9</text>
<text x="848.6" y="81.8" font-size="12.2" fill="#000" textLength="12.2" lengthAdjust="spacingAndGlyphs">10</text>
<text x="917.6" y="81.8" font-size="12.2" fill="#000" textLength="12.2" lengthAdjust="spacingAndGlyphs">11</text>
<text x="985.6" y="81.8" font-size="12.2" fill="#000" textLength="12.2" lengthAdjust="spacingAndGlyphs">12</text>
<text x="1054.6" y="81.8" font-size="12.2" fill="#000" textLength="12.2" lengthAdjust="spacingAndGlyphs">13</text>
<text x="1123.6" y="81.8" font-size="12.2" fill="#000" textLength="12.2" lengthAdjust="spacingAndGlyphs">14</text>
<text x="1192.6" y="81.8" font-size="12.2" fill="#000" textLength="12.2" lengthAdjust="spacingAndGlyphs">15</text>
<text x="1260.6" y="81.8" font-size="12.2" fill="#000" textLength="12.2" lengthAdjust="spacingAndGlyphs">16</text>
<text x="1329.6" y="81.8" font-size="12.2" fill="#000" textLength="12.2" lengthAdjust="spacingAndGlyphs">17</text>
<path d="M833.3 70V88.5" stroke="#2f7ad8" stroke-width="1.2" fill="none"/>
</g>
<g clip-path="url(#cpl)">
<path d="M60.5 89V644" stroke="#3c3c3c" stroke-width="1" fill="none"/>
<path d="M57.2 93.5H61.5M57.2 106.5H61.5M57.2 120.5H61.5M57.2 148.5H61.5M57.2 161.5H61.5M57.2 175.5H61.5M57.2 189.5H61.5M57.2 216.5H61.5M57.2 230.5H61.5M57.2 244.5H61.5M57.2 258.5H61.5M57.2 285.5H61.5M57.2 299.5H61.5M57.2 313.5H61.5M57.2 326.5H61.5M57.2 354.5H61.5M57.2 368.5H61.5M57.2 381.5H61.5M57.2 395.5H61.5M57.2 423.5H61.5M57.2 436.5H61.5M57.2 450.5H61.5M57.2 464.5H61.5M57.2 491.5H61.5M57.2 505.5H61.5M57.2 519.5H61.5M57.2 533.5H61.5M57.2 560.5H61.5M57.2 574.5H61.5M57.2 588.5H61.5M57.2 601.5H61.5M57.2 629.5H61.5M57.2 643.5H61.5" stroke="#3c3c3c" stroke-width="1" fill="none"/>
<path d="M43 134.5H61.5M43 203.5H61.5M43 271.5H61.5M43 340.5H61.5M43 409.5H61.5M43 478.5H61.5M43 546.5H61.5M43 615.5H61.5" stroke="#000" stroke-width="1.5" fill="none"/>
<text transform="translate(55.1 137.8) rotate(-90)" font-size="12.2" fill="#000" text-anchor="end">0m</text>
<text transform="translate(55.1 206.8) rotate(-90)" font-size="12.2" fill="#000" text-anchor="end">1</text>
<text transform="translate(55.1 274.8) rotate(-90)" font-size="12.2" fill="#000" text-anchor="end">2</text>
<text transform="translate(55.1 343.8) rotate(-90)" font-size="12.2" fill="#000" text-anchor="end">3</text>
<text transform="translate(55.1 412.8) rotate(-90)" font-size="12.2" fill="#000" text-anchor="end">4</text>
<text transform="translate(55.1 481.8) rotate(-90)" font-size="12.2" fill="#000" text-anchor="end">5</text>
<text transform="translate(55.1 549.8) rotate(-90)" font-size="12.2" fill="#000" text-anchor="end">6</text>
<text transform="translate(55.1 618.8) rotate(-90)" font-size="12.2" fill="#000" text-anchor="end">7</text>
<path d="M43 412.3H62" stroke="#2f7ad8" stroke-width="1.2" fill="none"/>
</g>
<g><path d="M47.9 79.6V75.6Q47.9 73.9 49.9 73.9Q51.9 73.9 51.9 75.6V79.6" fill="#dcdcdc" stroke="#8c8c8c" stroke-width="1.7"/><rect x="49.4" y="79.7" width="10.3" height="6.9" rx="0.9" fill="#efd91c" stroke="#cdb40a" stroke-width="0.7"/><rect x="50.4" y="80.6" width="7" height="2.6" fill="#f9ec5a" opacity="0.8"/></g>
<rect x="1347" y="106.5" width="15.5" height="267.3" fill="#cdcdcd"/>
<path d="M1351.2 99.6L1354.5 96.2L1357.8 99.6" fill="none" stroke="#505050" stroke-width="1.8"/>
<path d="M1351.2 633.6L1354.5 637L1357.8 633.6" fill="none" stroke="#505050" stroke-width="1.9"/>
<rect x="119" y="645" width="1209.6" height="15" fill="#cdcdcd"/>
<path d="M72 649.1L68.6 652.4L72 655.7" fill="none" stroke="#505050" stroke-width="1.9"/>
<path d="M1336 649.3L1339.4 652.6L1336 655.9" fill="none" stroke="#505050" stroke-width="1.9"/>
</svg>
<svg style="left:0;top:0" width="1366" height="728" viewBox="0 0 1366 728">
<rect x="40" y="663" width="1326" height="65" fill="#fbfbfb"/>
<rect x="40" y="663" width="1" height="65" fill="#7c7a76"/>
<rect x="40" y="667" width="1326" height="1" fill="#6e6e6e"/>
<rect x="42" y="669" width="1322" height="57" fill="#a0a0a0"/>
<rect x="42" y="669" width="1321" height="1" fill="#6e6e6e"/>
<rect x="42" y="669" width="1" height="56" fill="#6e6e6e"/>
<rect x="43" y="670" width="1320" height="55" fill="#e6e6e6"/>
<path d="M43.9 667L46.4 664L48.9 667ZM55 664.2L61 664.2L58 667.2Z" fill="#000"/>
<defs><clipPath id="c3"><rect x="43" y="670" width="1320" height="55"/></clipPath></defs>
<g clip-path="url(#c3)">
<polygon points="280.5,669.5 309.8,669.5 289,725.5 258,725.5" fill="#ffffff"/>
<polygon points="309.8,669.5 371.5,669.5 353.8,725.5 289,725.5" fill="#a8a8a8"/>
<polygon points="371.5,669.5 414,669.5 397.5,725.5 353.8,725.5" fill="#ffffff"/>
<polygon points="414,669.5 432,669.5 420.5,725.5 397.5,725.5" fill="#b2b2b2"/>
<polygon points="1013.5,669.5 1097.3,669.5 1118.3,725.5 1030.3,725.5" fill="#a8a8a8"/>
<polygon points="1097.3,669.5 1126.3,669.5 1148.3,725.5 1118.3,725.5" fill="#ffffff"/>
<rect x="432" y="669" width="12" height="6" fill="#d9d9d9"/><rect x="436" y="669" width="6" height="5" fill="#f2f2f2"/>
<rect x="495" y="669" width="17" height="6" fill="#d6d6d6"/>
<rect x="600" y="669" width="10" height="6" fill="#d6d6d6"/>
<rect x="729" y="669" width="8" height="6" fill="#d8d8d8"/>
<rect x="885" y="669" width="7" height="7" fill="#d8d8d8"/><rect x="885" y="669" width="1" height="7" fill="#b0b0b0"/>
<path d="M812.5 669H846L845 672.5Q832 678.5 814.5 678.3Z" fill="#1a1208"/>
<path d="M813 669H845.3L844.8 671Q832 676.6 814.2 676.4Z" fill="#e8832a"/>
<rect x="815" y="669" width="1.2" height="5" fill="#6a4a2a"/>
</g>
<defs><linearGradient id="gr" x1="0" y1="0" x2="1" y2="1"><stop offset="0" stop-color="#a4e060"/><stop offset="1" stop-color="#4a981c"/></linearGradient></defs>
<circle cx="71.6" cy="699.4" r="25.3" fill="#e6e6e6" stroke="#1c1c1c" stroke-width="1.25"/>
<path transform="translate(71.6 699.4) rotate(0)" d="M0 -24.3L7.2 -15.100000000000001L3.7 -15.9L3.7 -9.700000000000001L-3.7 -9.700000000000001L-3.7 -15.9L-7.2 -15.100000000000001Z" fill="#58a626" stroke="#4b9a1e" stroke-width="0.8" stroke-linejoin="round"/>
<path transform="translate(71.6 699.4) rotate(0)" d="M0 -22.1L4.6 -16.5L2.3 -16.9L2.3 -10.9L-2.3 -10.9L-2.3 -16.9L-4.6 -16.5Z" fill="url(#gr)" stroke="#a9e070" stroke-width="0.7" stroke-linejoin="round"/>
<path transform="translate(71.6 699.4) rotate(90)" d="M0 -23.3L7.2 -14.100000000000001L3.7 -14.9L3.7 -8.700000000000001L-3.7 -8.700000000000001L-3.7 -14.9L-7.2 -14.100000000000001Z" fill="#58a626" stroke="#4b9a1e" stroke-width="0.8" stroke-linejoin="round"/>
<path transform="translate(71.6 699.4) rotate(90)" d="M0 -21.1L4.6 -15.5L2.3 -15.9L2.3 -9.9L-2.3 -9.9L-2.3 -15.9L-4.6 -15.5Z" fill="url(#gr)" stroke="#a9e070" stroke-width="0.7" stroke-linejoin="round"/>
<path transform="translate(71.6 699.4) rotate(180)" d="M0 -24.3L7.2 -15.100000000000001L3.7 -15.9L3.7 -9.700000000000001L-3.7 -9.700000000000001L-3.7 -15.9L-7.2 -15.100000000000001Z" fill="#58a626" stroke="#4b9a1e" stroke-width="0.8" stroke-linejoin="round"/>
<path transform="translate(71.6 699.4) rotate(180)" d="M0 -22.1L4.6 -16.5L2.3 -16.9L2.3 -10.9L-2.3 -10.9L-2.3 -16.9L-4.6 -16.5Z" fill="url(#gr)" stroke="#a9e070" stroke-width="0.7" stroke-linejoin="round"/>
<path transform="translate(71.6 699.4) rotate(270)" d="M0 -23.3L7.2 -14.100000000000001L3.7 -14.9L3.7 -8.700000000000001L-3.7 -8.700000000000001L-3.7 -14.9L-7.2 -14.100000000000001Z" fill="#58a626" stroke="#4b9a1e" stroke-width="0.8" stroke-linejoin="round"/>
<path transform="translate(71.6 699.4) rotate(270)" d="M0 -21.1L4.6 -15.5L2.3 -15.9L2.3 -9.9L-2.3 -9.9L-2.3 -15.9L-4.6 -15.5Z" fill="url(#gr)" stroke="#a9e070" stroke-width="0.7" stroke-linejoin="round"/>
<path d="M71.6 691.0L79.19999999999999 698.8L63.99999999999999 698.8Z" fill="#57a428"/>
<path d="M71.6 707.8L79.19999999999999 700.1999999999999L63.99999999999999 700.1999999999999Z" fill="#73bd3a"/>
<rect x="63.99999999999999" y="699.0" width="15.2" height="1" fill="#f6f6f6"/>
</svg>
</body></html>
